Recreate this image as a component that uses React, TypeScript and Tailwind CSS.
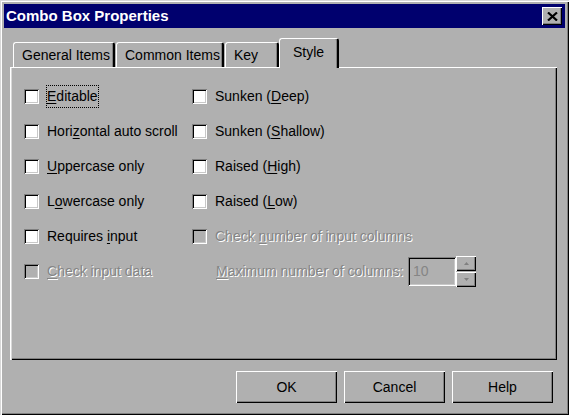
import React from "react";

const raised =
  "shadow-[inset_1px_1px_0_#fff,inset_-1px_-1px_0_#000,inset_-2px_-2px_0_#808080]";
const sunken =
  "shadow-[inset_1px_1px_0_#808080,inset_-1px_-1px_0_#fff,inset_2px_2px_0_#000,inset_-2px_-2px_0_#c8c8c8]";

function U({ children }: { children: React.ReactNode }) {
  return <span className="underline decoration-1 underline-offset-[2px]">{children}</span>;
}

function Box({ disabled }: { disabled?: boolean }) {
  return (
    <div
      className={
        disabled
          ? "w-[15px] h-[15px] shrink-0 bg-[#b0b0b0] " + sunken
          : "w-[15px] h-[15px] shrink-0 bg-white " + sunken
      }
    />
  );
}

function Check({
  label,
  disabled,
  focus,
}: {
  label: React.ReactNode;
  disabled?: boolean;
  focus?: boolean;
}) {
  return (
    <div className="flex items-center h-[35px]">
      <Box disabled={disabled} />
      <span
        className={
          (focus
            ? "border border-dotted border-black "
            : "border border-transparent ") +
          (disabled
            ? "ml-[7px] px-0 py-[2px] leading-[17px] text-[#858585] [text-shadow:1px_1px_0_#fff]"
            : "ml-[7px] px-0 py-[2px] leading-[17px] text-black")
        }
      >
        {label}
      </span>
    </div>
  );
}

function Tab({
  label,
  w,
  selected,
}: {
  label: string;
  w: string;
  selected?: boolean;
}) {
  if (selected) {
    return (
      <div
        className={
          "relative z-10 -mb-[1px] h-[30px] flex items-start justify-center pt-[5px] bg-[#b0b0b0] rounded-t-[3px] border-t border-l border-white border-r-2 border-r-black shadow-[inset_-1px_0_0_#808080] " +
          w
        }
      >
        <span className="leading-[17px]">{label}</span>
      </div>
    );
  }
  return (
    <div
      className={
        "h-[25px] flex items-start pl-[8px] pt-[4px] bg-[#b0b0b0] rounded-t-[3px] border-t border-l border-white border-r-2 border-r-black shadow-[inset_-1px_0_0_#808080] " +
        w
      }
    >
      <span className="leading-[17px]">{label}</span>
    </div>
  );
}

function Button({ label }: { label: string }) {
  return (
    <div
      className={
        "w-[101px] h-[32px] flex items-center justify-center bg-[#b0b0b0] " + raised
      }
    >
      <span className="leading-[17px]">{label}</span>
    </div>
  );
}

export default function App() {
  return (
    <div
      className={
        "w-[569px] h-[415px] bg-[#b0b0b0] p-[4px] flex flex-col text-[14px] text-black font-['Liberation_Sans',Arial,sans-serif] shadow-[inset_1px_1px_0_#d8d8d8,inset_2px_2px_0_#fff,inset_-1px_-1px_0_#000,inset_-2px_-2px_0_#808080]"
      }
    >
      {/* Title bar */}
      <div className="h-[24px] bg-[#00006e] flex items-center justify-between pl-[2px] pr-[3px]">
        <span className="text-white font-bold text-[15px] leading-[18px]">
          Combo Box Properties
        </span>
        <div
          className={
            "w-[20px] h-[18px] bg-[#b0b0b0] flex items-center justify-center " + raised
          }
        >
          <svg width="11" height="9" viewBox="0 0 11 9">
            <path d="M1 0.5 L10 8.5 M10 0.5 L1 8.5" stroke="#000" strokeWidth="2.2" />
          </svg>
        </div>
      </div>

      {/* Tabs */}
      <div className="mt-[11px] h-[28px] flex items-end pl-[3px] ml-[6px]">
        <Tab label="General Items" w="w-[102px]" />
        <div className="w-[1px]" />
        <Tab label="Common Items" w="w-[108px]" />
        <div className="w-[1px]" />
        <Tab label="Key" w="w-[54px]" />
        <Tab label="Style" w="w-[60px]" selected />
      </div>

      {/* Panel */}
      <div
        className={
          "ml-[6px] mr-[8px] h-[293px] bg-[#b0b0b0] pl-[14px] pt-[12px] flex shadow-[inset_1px_1px_0_#fff,inset_2px_0_0_#d8d8d8,inset_-1px_-1px_0_#000,inset_-2px_-2px_0_#808080]"
        }
      >
        <div className="w-[168px] flex flex-col">
          <Check label={<><U>E</U>ditable</>} focus />
          <Check label={<>Hori<U>z</U>ontal auto scroll</>} />
          <Check label={<><U>U</U>ppercase only</>} />
          <Check label={<>L<U>o</U>wercase only</>} />
          <Check label={<>Requires <U>i</U>nput</>} />
          <Check label={<><U>C</U>heck input data</>} disabled />
        </div>
        <div className="flex flex-col">
          <Check label={<>Sunken (<U>D</U>eep)</>} />
          <Check label={<>Sunken (<U>S</U>hallow)</>} />
          <Check label={<>Raised (<U>H</U>igh)</>} />
          <Check label={<>Raised (<U>L</U>ow)</>} />
          <Check label={<>Check <U>n</U>umber of input columns</>} disabled />
          <div className="flex items-center h-[35px] pl-[24px]">
            <span className="w-[192px] leading-[17px] text-[#858585] [text-shadow:1px_1px_0_#fff]">
              <U>M</U>aximum number of columns:
            </span>
            <div
              className={
                "w-[48px] h-[29px] bg-[#b0b0b0] flex items-center pl-[5px] text-[#858585] " +
                sunken
              }
            >
              <span className="leading-[17px]">10</span>
            </div>
            <div className="w-[20px] h-[31px] flex flex-col justify-between">
              <div
                className={
                  "h-[15px] bg-[#b0b0b0] flex items-center justify-center " + raised
                }
              >
                <svg width="5" height="3" viewBox="0 0 5 3">
                  <path d="M2.5 0 L5 3 L0 3 Z" fill="#808080" />
                </svg>
              </div>
              <div
                className={
                  "h-[15px] bg-[#b0b0b0] flex items-center justify-center " + raised
                }
              >
                <svg width="5" height="3" viewBox="0 0 5 3">
                  <path d="M0 0 L5 0 L2.5 3 Z" fill="#808080" />
                </svg>
              </div>
            </div>
          </div>
        </div>
      </div>

      {/* Buttons */}
      <div className="mt-[11px] flex justify-end gap-[7px] mr-[12px]">
        <Button label="OK" />
        <Button label="Cancel" />
        <Button label="Help" />
      </div>
    </div>
  );
}
